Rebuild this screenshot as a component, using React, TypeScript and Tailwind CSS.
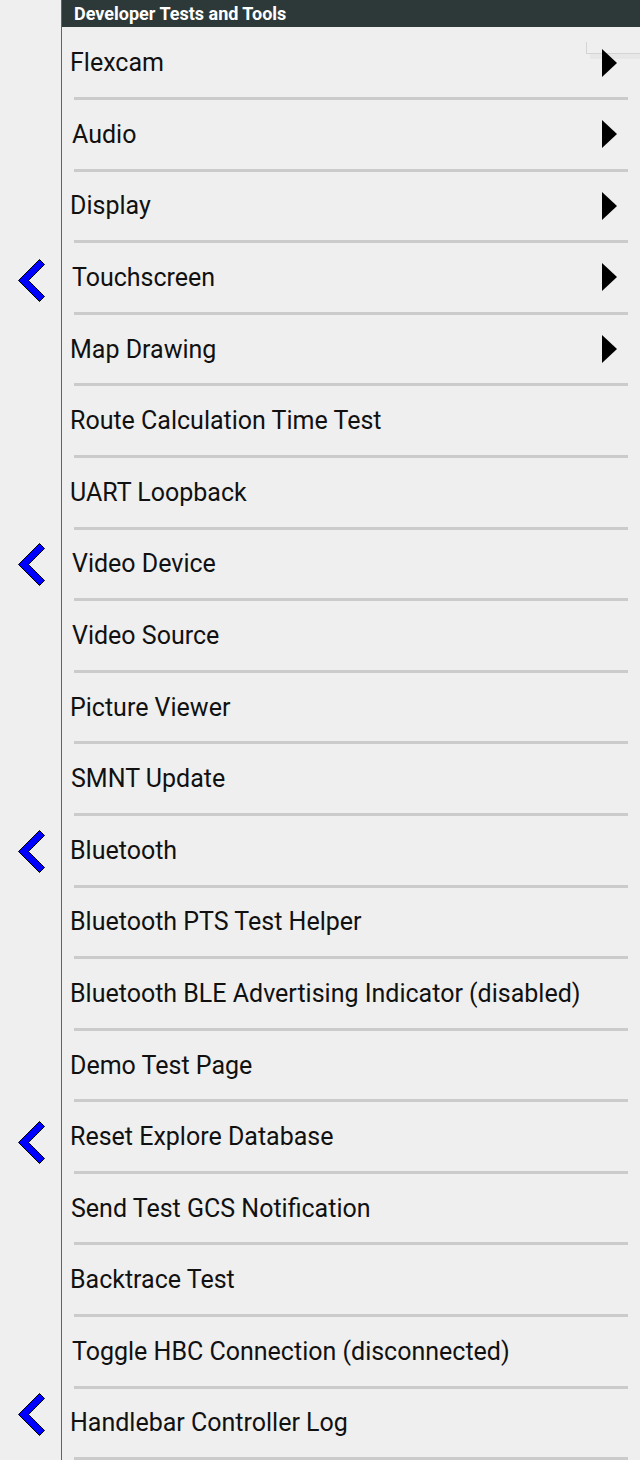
type Row = {
  label: string
  arrow?: boolean
  pad: string
  chevron?: string
}

const rows: Row[] = [
  { label: 'Flexcam', arrow: true, pad: 'pl-[8px]' },
  { label: 'Audio', arrow: true, pad: 'pl-[10px]' },
  { label: 'Display', arrow: true, pad: 'pl-[8px]' },
  { label: 'Touchscreen', arrow: true, pad: 'pl-[10px]', chevron: 'translate-y-[2px]' },
  { label: 'Map Drawing', arrow: true, pad: 'pl-[8px]' },
  { label: 'Route Calculation Time Test', pad: 'pl-[8px]' },
  { label: 'UART Loopback', pad: 'pl-[8px]' },
  { label: 'Video Device', pad: 'pl-[10px]', chevron: '-translate-y-[1px]' },
  { label: 'Video Source', pad: 'pl-[10px]' },
  { label: 'Picture Viewer', pad: 'pl-[8px]' },
  { label: 'SMNT Update', pad: 'pl-[9px]' },
  { label: 'Bluetooth', pad: 'pl-[8px]', chevron: 'translate-y-0' },
  { label: 'Bluetooth PTS Test Helper', pad: 'pl-[8px]' },
  { label: 'Bluetooth BLE Advertising Indicator (disabled)', pad: 'pl-[8px]' },
  { label: 'Demo Test Page', pad: 'pl-[8px]' },
  { label: 'Reset Explore Database', pad: 'pl-[8px]', chevron: 'translate-y-[4px]' },
  { label: 'Send Test GCS Notification', pad: 'pl-[9px]' },
  { label: 'Backtrace Test', pad: 'pl-[8px]' },
  { label: 'Toggle HBC Connection (disconnected)', pad: 'pl-[10px]' },
  { label: 'Handlebar Controller Log', pad: 'pl-[8px]', chevron: '-translate-y-[10px]' },
]

function Chevron({ className }: { className?: string }) {
  return (
    <svg width="27" height="43" viewBox="0 0 27 43" className={className} aria-hidden>
      <polygon
        points="0.5,21.5 21.5,0.5 26.5,5.5 10.5,21.5 26.5,37.5 21.5,42.5"
        fill="#0000ff"
        stroke="#000"
        strokeWidth="1"
      />
    </svg>
  )
}

function Arrow() {
  return (
    <svg width="15" height="28" viewBox="0 0 15 28" className="relative z-10" aria-hidden>
      <polygon points="0,0 15,14 0,28" fill="#000" />
    </svg>
  )
}

export default function App() {
  return (
    <div
      className="relative h-[1460px] w-[640px] overflow-hidden bg-[#efefef] text-[#111]"
      style={{ fontFamily: 'Roboto, "Noto Sans", sans-serif' }}
    >
      {/* little frame in the top corner, under the first arrow */}
      <div className="absolute left-[586px] top-[42px] h-[12px] w-[54px] border-b border-l border-[#d4d4d4]" />
      <div className="absolute left-[590px] top-[54px] h-[5px] w-[50px] bg-[#e7e7e7]" />

      {/* header */}
      <div className="flex h-[28.4px]">
        <div className="w-[61px] shrink-0" />
        <div className="w-[1px] shrink-0 bg-[#ff2020]" />
        <div className="flex-1">
          <div className="flex h-[27.4px] items-center bg-[#2d3839] pl-[12px] text-[18px] font-bold leading-none text-white">
            Developer Tests and Tools
          </div>
        </div>
      </div>

      {rows.map((row) => (
        <div key={row.label} className="flex h-[71.6px]">
          <div className="flex w-[61px] shrink-0 items-center pl-[18px]">
            {row.chevron !== undefined && <Chevron className={row.chevron} />}
          </div>
          <div className="w-[1px] shrink-0 bg-[#ff2020]" />
          <div className="flex flex-1 flex-col">
            <div className={`flex flex-1 items-center justify-between pr-[23px] ${row.pad}`}>
              <span className="text-[25px] leading-none">{row.label}</span>
              {row.arrow && <Arrow />}
            </div>
            <div className="ml-[12px] h-[3px] w-[554px] bg-[#cbcbcb]" />
          </div>
        </div>
      ))}
    </div>
  )
}
